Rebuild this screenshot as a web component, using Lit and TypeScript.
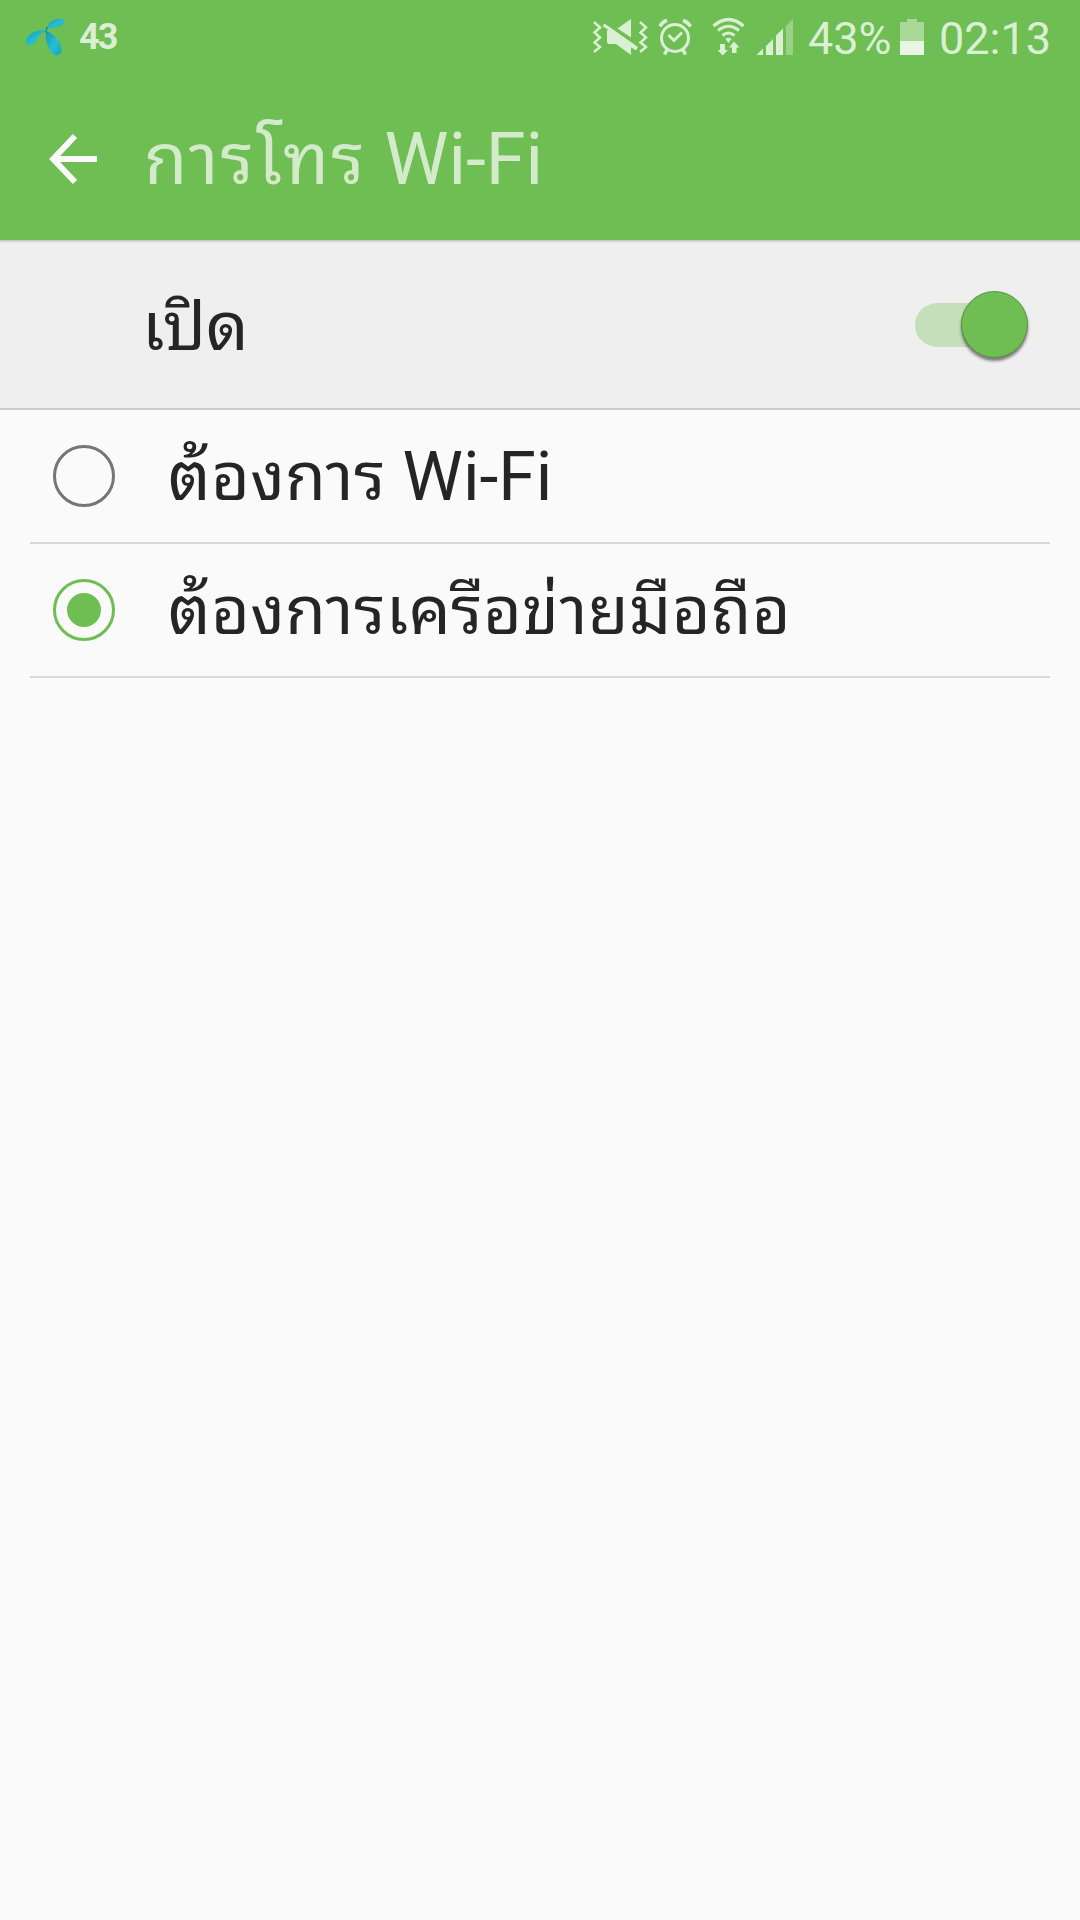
import { LitElement, html, css, svg } from "lit";
import { customElement, property, state } from "lit/decorators.js";

@customElement("status-bar")
class StatusBar extends LitElement {
  static styles = css`
    :host { display: block; }
    .bar {
      display: flex; align-items: flex-start; height: 78px; box-sizing: border-box;
      color: #dbefd5; font-family: Roboto, "Liberation Sans", sans-serif;
    }
    svg { display: block; flex: none; }
    .logo { margin-left: 24px; }
    .temp { font-size: 36px; font-weight: 700; line-height: 74px; margin-left: 11px; letter-spacing: -1.8px; }
    .icons { margin-left: auto; }
    .text { font-size: 45px; line-height: 77px; white-space: nowrap; }
    .percent { margin-left: 6px; width: 84px; }
    .battery { margin-left: 8px; }
    .time { margin-left: 15px; margin-right: 29px; }
  `;
  render() {
    return html`
      <div class="bar">
        <svg class="logo" width="44" height="72" viewBox="24 0 44 72">
          <defs>
            <linearGradient id="g" x1="0" y1="0" x2="1" y2="1">
              <stop offset="0" stop-color="#1795b4"></stop>
              <stop offset=".55" stop-color="#26bfd3"></stop>
              <stop offset="1" stop-color="#1a9fc0"></stop>
            </linearGradient>
          </defs>
          <path d="M47 28.500C48 21 56 17.500 64.500 19.500C66.500 25 56 28 47 28.500Z" fill="url(#g)"></path>
          <path d="M46.500 30.300C37 28.500 27 34 25.500 42C28 47 34 45.500 36.500 40.500C39 35 42 31.500 46.500 31.500Z" fill="url(#g)"></path>
          <path d="M46 31C53 33 61 41 61.500 49.500C61.500 55 57 57 53 54C48 50 45 40 46 31Z" fill="url(#g)"></path>
          <path d="M47.500 27Q45.500 29.500 46.500 33" fill="none" stroke="#268d86" stroke-width="1.500"></path>
        </svg>
        <span class="temp">43</span>
        <svg class="icons" width="220" height="72" viewBox="582 0 220 72" fill="#dbefd5">
          <g fill="none" stroke="#dbefd5" stroke-width="2.500">
            <path d="M594 22L600 27.500L594.500 32.500L600 37.500L594.500 42.500L600 47L594 52"></path>
            <path d="M640 22L646 27.500L640.500 32.500L646 37.500L640.500 42.500L646 47L640 52"></path>
          </g>
          <path d="M631 19V37.500L617.500 28.500Z"></path>
          <path d="M604.500 23.500L638 47L636 50.500L631 47.300V55L616 44H609.500Q607 44 607 41.500V31Q607 30 608.500 30L602.500 26Z"></path>
          <g fill="none" stroke="#dbefd5">
            <circle cx="675" cy="38" r="13.500" stroke-width="3"></circle>
            <path d="M668.500 35L674 40.500L682 32.500" stroke-width="3"></path>
            <path d="M660 26.500Q662 22 667 20.500M683 20.500Q688 22 690.500 26.500" stroke-width="3.500"></path>
            <path d="M667.500 49L664.500 54.500M682.500 49L685.500 54.500" stroke-width="3.500"></path>
          </g>
          <g fill="none" stroke="#dbefd5" stroke-width="3">
            <path d="M713.500 26Q728.500 13 743.500 26" stroke-width="3.300"></path>
            <path d="M718 30.500Q728.500 22 739 30.500"></path>
            <path d="M722.500 35.500Q728.500 30.500 734.500 35.500"></path>
          </g>
          <path d="M725.500 39Q728.500 36.500 731.500 39L728.500 43Z"></path>
          <path d="M720 44H725V50H728L722.700 55.500L717.500 50H720Z"></path>
          <path d="M734 41.500L739.500 47.500H736.500V53H732V47.500H729Z"></path>
          <path d="M756.500 55L763 48.500V55ZM766 55V46L773 39V55ZM776 55V35.500L783 28.500V55Z"></path>
          <path d="M786 55V26L793 19V55Z" opacity=".4"></path>
        </svg>
        <span class="text percent">43%</span>
        <svg class="battery" width="24" height="72" viewBox="900 0 24 72">
          <path d="M900 22H907V19H917V22H924V41H900Z" fill="#a9d899"></path>
          <path d="M900 41H924V55H900Z" fill="#e9f5e5"></path>
        </svg>
        <span class="text time">02:13</span>
      </div>`;
  }
}

@customElement("toggle-switch")
class ToggleSwitch extends LitElement {
  static styles = css`
    :host { display: block; }
    .track {
      display: flex; align-items: center; justify-content: flex-end; margin-top: 2px;
      width: 113px; height: 44px; border-radius: 22px;
      background: linear-gradient(90deg, #c5dfbb 0 85px, transparent 85px);
    }
    .thumb {
      flex: none; width: 67px; height: 67px; box-sizing: border-box; border-radius: 50%; margin-bottom: 1px;
      background: #6ebe53; border: 1px solid #51953c; box-shadow: 0 3px 3px rgba(40, 25, 40, .55);
    }
  `;
  render() {
    return html`<div class="track"><div class="thumb"></div></div>`;
  }
}

@customElement("radio-row")
class RadioRow extends LitElement {
  @property() label = "";
  @property() latin = "";
  @property({ type: Boolean }) checked = false;
  static styles = css`
    :host { display: block; padding: 0 30px; }
    .row {
      display: flex; align-items: center; height: 134px; box-sizing: border-box;
      border-bottom: 2px solid #d7d7d7; padding-left: 22px; cursor: pointer;
    }
    svg { display: block; flex: none; }
    .label {
      margin-left: 52px; color: #252525; font-size: 68px; line-height: 134px; height: 132px;
      white-space: pre; font-family: Roboto, sans-serif;
    }
    .thai {
      font-family: "Noto Sans Thai Looped", Sarabun, sans-serif;
      font-size: 66.5px; line-height: 0; letter-spacing: .4px;
    }
  `;
  render() {
    const color = this.checked ? "#6ebe53" : "#757575";
    return html`
      <div class="row">
        <svg width="64" height="64" viewBox="0 0 64 64">
          <circle cx="32" cy="32" r="29.500" fill="none" stroke=${color} stroke-width="3"></circle>
          ${this.checked ? svg`<circle cx="32" cy="32" r="17" fill=${color}></circle>` : null}
        </svg>
        <span class="label"><span class="thai">${this.label}</span>${this.latin ? html` <span>${this.latin}</span>` : null}</span>
      </div>`;
  }
}

@customElement("app-root")
class AppRoot extends LitElement {
  @state() private selected = 1;
  private options = [
    { label: "ต้องการ", latin: "Wi-Fi" },
    { label: "ต้องการเครือข่ายมือถือ", latin: "" },
  ];
  static styles = css`
    :host {
      display: flex; flex-direction: column; width: 1080px; height: 1920px; overflow: hidden;
      background: #fafafa; font-family: Roboto, sans-serif;
    }
    .header { background: #6ebe53; height: 240px; flex: none; }
    .title-bar { display: flex; align-items: center; height: 162px; }
    .back { display: block; margin-left: 46px; flex: none; }
    .title { margin-left: 42px; font-size: 72px; line-height: 163px; height: 162px; color: #d4ebcb; white-space: pre; }
    .thai { font-family: "Noto Sans Thai Looped", Sarabun, sans-serif; font-size: .978em; line-height: 0; }
    .title .thai { letter-spacing: 2.2px; }
    .master {
      flex: none; display: flex; align-items: center; height: 170px; box-sizing: border-box;
      padding: 0 52px 0 142px; background: linear-gradient(#c0c0c0, #efefef 3px);
      border-bottom: 2px solid #cacaca;
    }
    .state { flex: 1; font-size: 68px; line-height: 174px; height: 168px; color: #252525; }
  `;
  render() {
    return html`
      <div class="header">
        <status-bar></status-bar>
        <div class="title-bar">
          <svg class="back" width="56" height="64" viewBox="46 127 56 64">
            <path d="M97 159H54M75 136L53.200 159L75 182" fill="none" stroke="#fafafa" stroke-width="6"></path>
          </svg>
          <span class="title"><span class="thai">การโทร</span> <span>Wi-Fi</span></span>
        </div>
      </div>
      <div class="master">
        <span class="state"><span class="thai">เปิด</span></span>
        <toggle-switch></toggle-switch>
      </div>
      ${this.options.map((o, i) => html`
        <radio-row .label=${o.label} .latin=${o.latin} .checked=${i === this.selected}
          @click=${() => { this.selected = i; }}></radio-row>`)}
    `;
  }
}
